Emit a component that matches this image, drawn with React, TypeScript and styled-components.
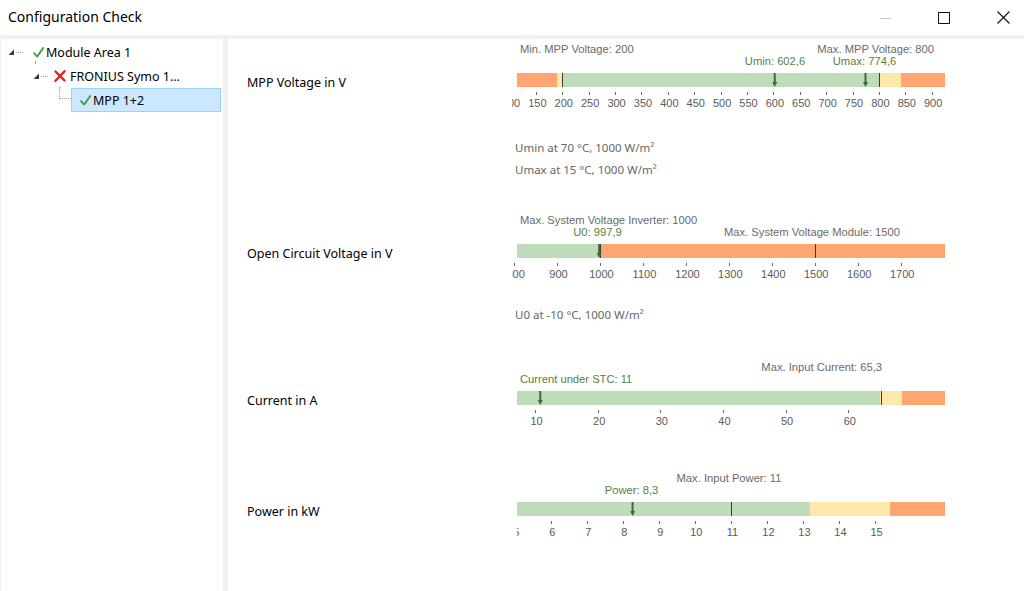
import React from "react";
import styled, { createGlobalStyle } from "styled-components";

const GlobalStyle = createGlobalStyle`
  html, body { margin: 0; padding: 0; background: #fff; }
  body { font-family: "Noto Sans", "Open Sans", sans-serif; }
`;

const Window = styled.div`
  width: 1024px;
  height: 591px;
  display: flex;
  flex-direction: column;
  background: #fff;
  overflow: hidden;
`;

const TitleBar = styled.div`
  height: 35px;
  flex: none;
  display: flex;
  align-items: center;
  padding-left: 8px;
`;

const Title = styled.div`
  flex: 1;
  font-size: 14px;
  color: #000;
  line-height: 20px;
  margin-top: -1px;
`;

const Controls = styled.div`
  display: flex;
  gap: 17px;
  align-self: stretch;
`;

const ControlButton = styled.div`
  width: 42px;
  display: flex;
  align-items: center;
  justify-content: center;
`;

const Body = styled.div`
  flex: 1;
  display: flex;
  gap: 5px;
  background: #eff1f1;
  padding: 4px 0 0 1px;
  min-height: 0;
`;

const TreePanel = styled.div`
  width: 222px;
  background: #fff;
  padding-top: 1px;
  display: flex;
  flex-direction: column;
`;

const TreeRow = styled.div<{ $indent: number }>`
  height: 24px;
  display: flex;
  align-items: center;
  padding-left: ${(p) => p.$indent}px;
  font-size: 12.5px;
  color: #000;
  position: relative;
`;

const ExpanderCell = styled.div<{ $w: number }>`
  width: ${(p) => p.$w}px;
  display: flex;
  align-items: center;
  flex: none;
`;

const Dots = styled.div`
  width: 7px;
  margin-left: 1px;
  border-top: 1px dotted #9a9a9a;
  margin-top: 1px;
`;

const VDots = styled.div`
  position: absolute;
  left: 34px;
  top: 21px;
  height: 2px;
  border-left: 1px dotted #9a9a9a;
`;

const IconBox = styled.div`
  width: 12px;
  height: 12px;
  display: flex;
  align-items: center;
  justify-content: center;
  flex: none;
  margin-right: 2px;
`;

const ItemText = styled.span<{ $shift?: number }>`
  margin-left: ${(p) => p.$shift ?? 0}px;
  white-space: nowrap;
`;

const Connector = styled.div`
  width: 11px;
  height: 11px;
  flex: none;
  align-self: flex-start;
  margin-top: -1px;
  border-left: 1px dotted #9a9a9a;
  border-bottom: 1px dotted #9a9a9a;
`;

const Selected = styled.div`
  width: 150px;
  height: 24px;
  box-sizing: border-box;
  background: #cce8ff;
  border: 1px solid #99d1ff;
  display: flex;
  align-items: center;
  padding-left: 7px;
`;

const ContentPanel = styled.div`
  flex: 1;
  background: #fff;
  padding-left: 19px;
  display: flex;
  flex-direction: column;
`;

const Section = styled.div<{ $top: number }>`
  display: grid;
  grid-template-columns: 258px 440px;
  margin-top: ${(p) => p.$top}px;
`;

const SectionLabel = styled.div`
  font-size: 12.5px;
  line-height: 16px;
  color: #000;
  padding-top: 36px;
`;

const NoteList = styled.div<{ $top: number }>`
  margin-left: 268px;
  margin-top: ${(p) => p.$top}px;
  display: flex;
  flex-direction: column;
`;

const Note = styled.div`
  font-size: 11.5px;
  line-height: 22px;
  color: #666;
`;

const GaugeSvg = styled.svg`
  display: block;
  overflow: visible;
  font-family: "Liberation Sans", Arial, sans-serif;
`;

const ExpanderIcon = () => (
  <svg width="7" height="7" viewBox="0 0 7 7">
    <polygon points="6,0.5 6,6 0.5,6" fill="#3a3a3a" />
  </svg>
);

const CheckIcon = () => (
  <svg width="11" height="11" viewBox="0 0 11 11">
    <path d="M1 6.2 L4.2 9.6 L10.2 1" fill="none" stroke="#4b9a4b" strokeWidth="1.9" strokeLinecap="round" strokeLinejoin="round" />
  </svg>
);

const CrossIcon = () => (
  <svg width="12" height="12" viewBox="0 0 12 12">
    <path d="M1.5 1.5 L10.5 10.5 M10.5 1.2 L1.5 10.8" fill="none" stroke="#e3211c" strokeWidth="2.4" strokeLinecap="round" />
  </svg>
);

type Seg = { from: number; to: number; color: string };
type Annot = { text: string; x: number; anchor: "start" | "middle" | "end"; row: 1 | 2; accent?: boolean };
type GaugeProps = {
  ticks: { x: number; label: string }[];
  segments: Seg[];
  limits: number[];
  markers: number[];
  annotations: Annot[];
  clipX: number;
};

const OX = 505;
const ORANGE = "#ffa670";
const YELLOW = "#fde9a9";
const GREEN = "#bedbba";

const Gauge: React.FC<GaugeProps & { id: string }> = ({ ticks, segments, limits, markers, annotations, clipX, id }) => {
  return (
    <GaugeSvg width={440} height={74} viewBox="0 0 440 74">
      <defs>
        <clipPath id={id}>
          <rect x={clipX - OX} y={0} width={460} height={74} />
        </clipPath>
      </defs>
      {annotations.map((a, i) => (
        <text
          key={i}
          x={a.x - OX}
          y={a.row === 1 ? 13.5 : 25.5}
          textAnchor={a.anchor}
          fontSize={11.2}
          fill={a.accent ? "#5b8040" : "#6a6a6a"}
        >
          {a.text}
        </text>
      ))}
      {segments.map((s, i) => (
        <rect key={i} x={s.from - OX} y={34} width={s.to - s.from} height={14} fill={s.color} />
      ))}
      {limits.map((x, i) => (
        <rect key={i} x={Math.round(x) - OX} y={34} width={1} height={14} fill="#3a3a3a" />
      ))}
      {markers.map((x, i) => {
        const cx = x - OX;
        return (
          <g key={i}>
            <rect x={cx - 1} y={34} width={2} height={10} fill="#3d6b3d" />
            <polygon points={`${cx - 2.5},43 ${cx + 2.5},43 ${cx},48`} fill="#3d6b3d" />
          </g>
        );
      })}
      <g clipPath={`url(#${id})`}>
        {ticks.map((t, i) => (
          <g key={i}>
            <rect x={Math.round(t.x) - OX} y={53} width={1} height={3} fill="#6a6a6a" />
            <text x={t.x - OX + 1.5} y={68} textAnchor="middle" fontSize={11} fill="#5a5a5a">
              {t.label}
            </text>
          </g>
        ))}
      </g>
    </GaugeSvg>
  );
};

const makeTicks = (from: number, to: number, step: number, x0: number, v0: number, k: number) => {
  const res: { x: number; label: string }[] = [];
  for (let v = from; v <= to + 1e-9; v += step) res.push({ x: x0 + (v - v0) * k, label: String(v) });
  return res;
};

const mpp = (v: number) => 562.3 + (v - 200) * 0.5277;
const ocv = (v: number) => 600 + (v - 1000) * 0.4295;
const cur = (v: number) => 535 + (v - 10) * 6.265;
const pow = (v: number) => 514.7 + (v - 5) * 36.03;

const gauges = {
  mpp: {
    clipX: 512,
    ticks: makeTicks(100, 900, 50, 562.3, 200, 0.5277),
    segments: [
      { from: 517, to: 557, color: ORANGE },
      { from: 557, to: 562, color: YELLOW },
      { from: 562, to: 879, color: GREEN },
      { from: 879, to: 901, color: YELLOW },
      { from: 901, to: 945, color: ORANGE },
    ],
    limits: [mpp(200), mpp(800)],
    markers: [mpp(602.6), mpp(774.6)],
    annotations: [
      { text: "Min. MPP Voltage: 200", x: 520, anchor: "start", row: 1 },
      { text: "Max. MPP Voltage: 800", x: 934, anchor: "end", row: 1 },
      { text: "Umin: 602,6", x: 775, anchor: "middle", row: 2, accent: true },
      { text: "Umax: 774,6", x: 864.5, anchor: "middle", row: 2, accent: true },
    ] as Annot[],
  },
  ocv: {
    clipX: 512,
    ticks: makeTicks(800, 1700, 100, 600, 1000, 0.4295),
    segments: [
      { from: 517, to: 600, color: GREEN },
      { from: 600, to: 945, color: ORANGE },
    ],
    limits: [ocv(1000), ocv(1500)],
    markers: [ocv(997.9)],
    annotations: [
      { text: "Max. System Voltage Inverter: 1000", x: 520, anchor: "start", row: 1 },
      { text: "U0: 997,9", x: 597.5, anchor: "middle", row: 2, accent: true },
      { text: "Max. System Voltage Module: 1500", x: 812, anchor: "middle", row: 2 },
    ] as Annot[],
  },
  cur: {
    clipX: 512,
    ticks: makeTicks(10, 60, 10, 535, 10, 6.265),
    segments: [
      { from: 517, to: 880, color: GREEN },
      { from: 880, to: 902, color: YELLOW },
      { from: 902, to: 945, color: ORANGE },
    ],
    limits: [880.5],
    markers: [cur(11) - 1],
    annotations: [
      { text: "Max. Input Current: 65,3", x: 882, anchor: "end", row: 1 },
      { text: "Current under STC: 11", x: 520, anchor: "start", row: 2, accent: true },
    ] as Annot[],
  },
  pow: {
    clipX: 517,
    ticks: makeTicks(5, 15, 1, 514.7, 5, 36.03),
    segments: [
      { from: 517, to: 810, color: GREEN },
      { from: 810, to: 890, color: YELLOW },
      { from: 890, to: 945, color: ORANGE },
    ],
    limits: [pow(11)],
    markers: [pow(8.3) - 1],
    annotations: [
      { text: "Max. Input Power: 11", x: 729, anchor: "middle", row: 1 },
      { text: "Power: 8,3", x: 631.5, anchor: "middle", row: 2, accent: true },
    ] as Annot[],
  },
};

export default function App() {
  return (
    <>
      <GlobalStyle />
      <Window>
        <TitleBar>
          <Title>Configuration Check</Title>
          <Controls>
            <ControlButton>
              <svg width="11" height="11" viewBox="0 0 11 11">
                <rect x="0" y="6" width="11" height="1" fill="#c8c8c8" />
              </svg>
            </ControlButton>
            <ControlButton>
              <svg width="12" height="12" viewBox="0 0 12 12">
                <rect x="0.5" y="0.5" width="11" height="11" fill="none" stroke="#111" strokeWidth="1" />
              </svg>
            </ControlButton>
            <ControlButton>
              <svg width="13" height="13" viewBox="0 0 13 13">
                <path d="M0.5 0.5 L12.5 12.5 M12.5 0.5 L0.5 12.5" stroke="#111" strokeWidth="1.1" />
              </svg>
            </ControlButton>
          </Controls>
        </TitleBar>
        <Body>
          <TreePanel>
            <TreeRow $indent={7}>
              <ExpanderCell $w={24}>
                <ExpanderIcon />
                <Dots />
              </ExpanderCell>
              <IconBox>
                <CheckIcon />
              </IconBox>
              <ItemText>Module Area 1</ItemText>
              <VDots />
            </TreeRow>
            <TreeRow $indent={32}>
              <ExpanderCell $w={21}>
                <ExpanderIcon />
                <Dots />
              </ExpanderCell>
              <IconBox>
                <CrossIcon />
              </IconBox>
              <ItemText $shift={2}>FRONIUS Symo 1...</ItemText>
            </TreeRow>
            <TreeRow $indent={58}>
              <Connector />
              <Selected>
                <IconBox>
                  <CheckIcon />
                </IconBox>
                <ItemText>MPP 1+2</ItemText>
              </Selected>
            </TreeRow>
          </TreePanel>
          <ContentPanel>
            <Section $top={0}>
              <SectionLabel>MPP Voltage in V</SectionLabel>
              <Gauge id="g1" {...gauges.mpp} />
            </Section>
            <NoteList $top={24}>
              <Note>Umin at 70 °C, 1000 W/m²</Note>
              <Note>Umax at 15 °C, 1000 W/m²</Note>
            </NoteList>
            <Section $top={29}>
              <SectionLabel>Open Circuit Voltage in V</SectionLabel>
              <Gauge id="g2" {...gauges.ocv} />
            </Section>
            <NoteList $top={20}>
              <Note>U0 at -10 °C, 1000 W/m²</Note>
            </NoteList>
            <Section $top={31}>
              <SectionLabel>Current in A</SectionLabel>
              <Gauge id="g3" {...gauges.cur} />
            </Section>
            <Section $top={37}>
              <SectionLabel>Power in kW</SectionLabel>
              <Gauge id="g4" {...gauges.pow} />
            </Section>
          </ContentPanel>
        </Body>
      </Window>
    </>
  );
}
